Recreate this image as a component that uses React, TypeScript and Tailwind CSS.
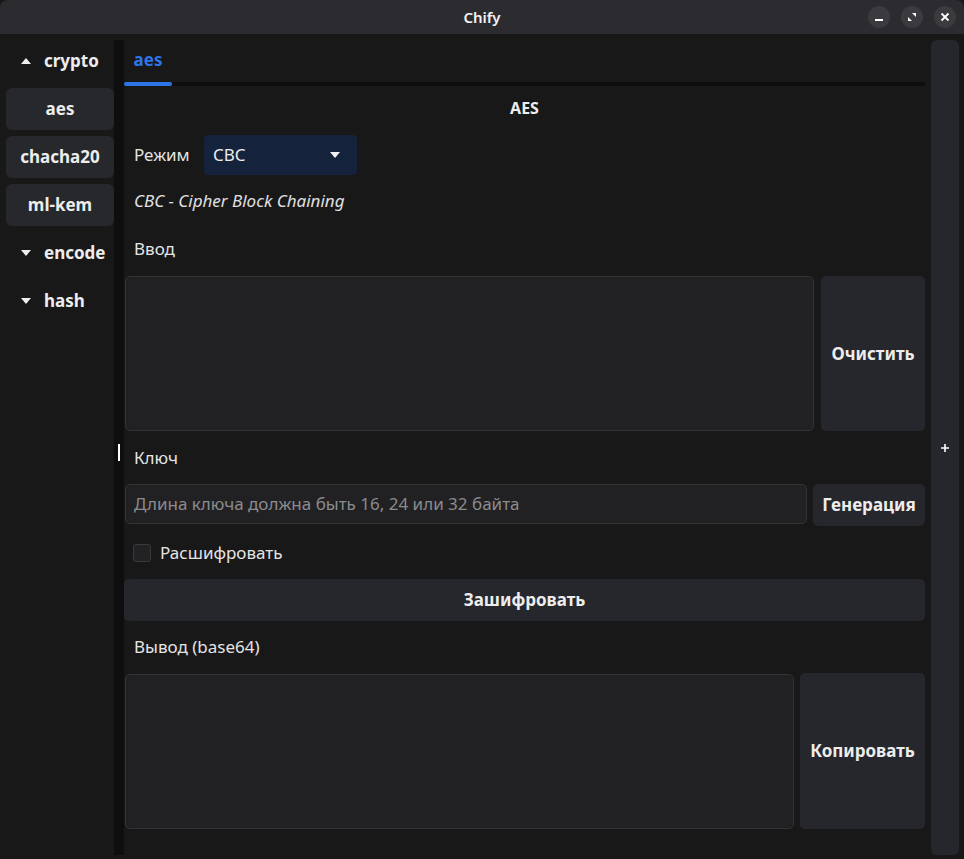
import React from "react";

const font = { fontFamily: '"Noto Sans", "Open Sans", sans-serif' };

function Tri({ up }: { up?: boolean }) {
  return (
    <svg width="10" height="6" viewBox="0 0 10 6" className="shrink-0">
      {up ? <path d="M0 6 L5 0 L10 6 Z" fill="#f0f0f0" /> : <path d="M0 0 L10 0 L5 6 Z" fill="#f0f0f0" />}
    </svg>
  );
}

function Group({ label, up }: { label: string; up?: boolean }) {
  return (
    <div className="h-[48px] flex items-center pl-[21px] gap-[13px]">
      <Tri up={up} />
      <span className="text-[17px] font-bold text-[#ededed]">{label}</span>
    </div>
  );
}

function SideBtn({ label }: { label: string }) {
  return (
    <div className="h-[42px] w-[108px] rounded-[6px] bg-[#27282c] flex items-center justify-center text-[17px] font-bold text-[#ededed]">
      {label}
    </div>
  );
}

function Label({ text, h }: { text: string; h: string }) {
  return (
    <div className={`${h} flex items-center pl-[10px] text-[17px] text-[#e4e4e4]`}>{text}</div>
  );
}

export default function App() {
  return (
    <div style={font} className="w-[964px] h-[859px] bg-[#181818] flex flex-col overflow-hidden text-[#e8e8e8]">
      {/* title bar */}
      <div className="h-[34px] shrink-0 bg-[#2c2c30] relative flex items-center justify-center rounded-t-[8px]">
        <span className="text-[15px] font-semibold text-[#f2f2f2]">Chify</span>
        <div className="absolute right-[8px] top-[6px] flex gap-[11px]">
          <div className="w-[22px] h-[22px] rounded-full bg-[#3b3b3f] flex items-center justify-center">
            <div className="w-[8px] h-[2px] bg-white mt-[5px]" />
          </div>
          <div className="w-[22px] h-[22px] rounded-full bg-[#3b3b3f] flex items-center justify-center">
            <svg width="10" height="10" viewBox="0 0 10 10">
              <path d="M5 1 H9 V5 Z" fill="white" />
              <path d="M1 5 V9 H5 Z" fill="white" />
            </svg>
          </div>
          <div className="w-[22px] h-[22px] rounded-full bg-[#3b3b3f] flex items-center justify-center">
            <svg width="10" height="10" viewBox="0 0 10 10">
              <path d="M1.5 1.5 L8.5 8.5 M8.5 1.5 L1.5 8.5" stroke="white" strokeWidth="1.8" />
            </svg>
          </div>
        </div>
      </div>

      <div className="flex-1 flex">
        {/* sidebar */}
        <div className="w-[114px] shrink-0 flex flex-col pt-[3px]">
          <Group label="crypto" up />
          <div className="flex flex-col gap-[6px] pl-[6px] mt-[3px]">
            <SideBtn label="aes" />
            <SideBtn label="chacha20" />
            <SideBtn label="ml-kem" />
          </div>
          <div className="mt-[3px]">
            <Group label="encode" />
            <Group label="hash" />
          </div>
        </div>

        {/* splitter strip */}
        <div className="w-[10px] shrink-0 mt-[6px] mb-[4px] bg-[#0e0e0e] relative">
          <div className="absolute left-[4px] top-[404px] w-[2px] h-[17px] bg-white" />
        </div>

        {/* content */}
        <div className="w-[801px] shrink-0 flex flex-col">
          <div className="h-[48px] flex items-end">
            <div className="w-[48px] h-[48px] flex items-center justify-center pt-[4px] text-[17px] font-bold text-[#2f74e6]">aes</div>
          </div>
          <div className="h-[4px] flex">
            <div className="w-[48px] h-[4px] rounded-full bg-[#2f74e6]" />
            <div className="flex-1 h-[4px] bg-[#0e0e0e]" />
          </div>

          <div className="h-[44px] flex items-center justify-center text-[16px] font-bold text-[#ededed]">AES</div>

          <div className="mt-[5px] h-[40px] flex items-center pl-[10px]">
            <span className="text-[17px] text-[#e4e4e4] w-[70px]">Режим</span>
            <div className="w-[153px] h-[40px] rounded-[4px] bg-[#14223b] flex items-center justify-between pl-[9px] pr-[17px]">
              <span className="text-[17px] text-[#ececec]">CBC</span>
              <Tri />
            </div>
          </div>

          <div className="h-[52px] flex items-center pl-[10px] text-[17px] italic text-[#e0e0e0]">CBC - Cipher Block Chaining</div>

          <Label text="Ввод" h="h-[44px]" />

          <div className="mt-[5px] h-[155px] flex gap-[7px]">
            <div className="ml-[1px] w-[689px] h-[155px] rounded-[5px] bg-[#212123] border border-[#333336]" />
            <div className="w-[104px] h-[155px] rounded-[5px] bg-[#26272c] flex items-center justify-center text-[17px] font-bold text-[#ededed]">
              Очистить
            </div>
          </div>

          <Label text="Ключ" h="h-[53px]" />

          <div className="h-[42px] flex gap-[6px]">
            <div className="ml-[1px] w-[682px] h-[40px] rounded-[5px] bg-[#212123] border border-[#333336] flex items-center pl-[8px] text-[17px] text-[#8b8b8e]">
              Длина ключа должна быть 16, 24 или 32 байта
            </div>
            <div className="w-[112px] h-[42px] rounded-[5px] bg-[#26272c] flex items-center justify-center text-[17px] font-bold text-[#ededed]">
              Генерация
            </div>
          </div>

          <div className="h-[53px] flex items-center pl-[9px] gap-[9px]">
            <div className="w-[18px] h-[18px] rounded-[3px] bg-[#222224] border border-[#3a3a3d]" />
            <span className="text-[17px] text-[#e4e4e4]">Расшифровать</span>
          </div>

          <div className="h-[42px] rounded-[5px] bg-[#26272c] flex items-center justify-center text-[17px] font-bold text-[#ededed]">
            Зашифровать
          </div>

          <Label text="Вывод (base64)" h="h-[52px]" />

          <div className="h-[156px] flex gap-[6px]">
            <div className="ml-[1px] mt-[1px] w-[669px] h-[155px] rounded-[5px] bg-[#212123] border border-[#333336]" />
            <div className="w-[125px] h-[156px] rounded-[5px] bg-[#26272c] flex items-center justify-center text-[17px] font-bold text-[#ededed]">
              Копировать
            </div>
          </div>
        </div>

        {/* right strip */}
        <div className="ml-[6px] w-[28px] shrink-0 mt-[6px] mb-[4px] rounded-[6px] bg-[#26272c] flex items-center justify-center">
          <svg width="8" height="8" viewBox="0 0 8 8">
            <path d="M4 0 V8 M0 4 H8" stroke="white" strokeWidth="1.6" />
          </svg>
        </div>
      </div>
    </div>
  );
}
